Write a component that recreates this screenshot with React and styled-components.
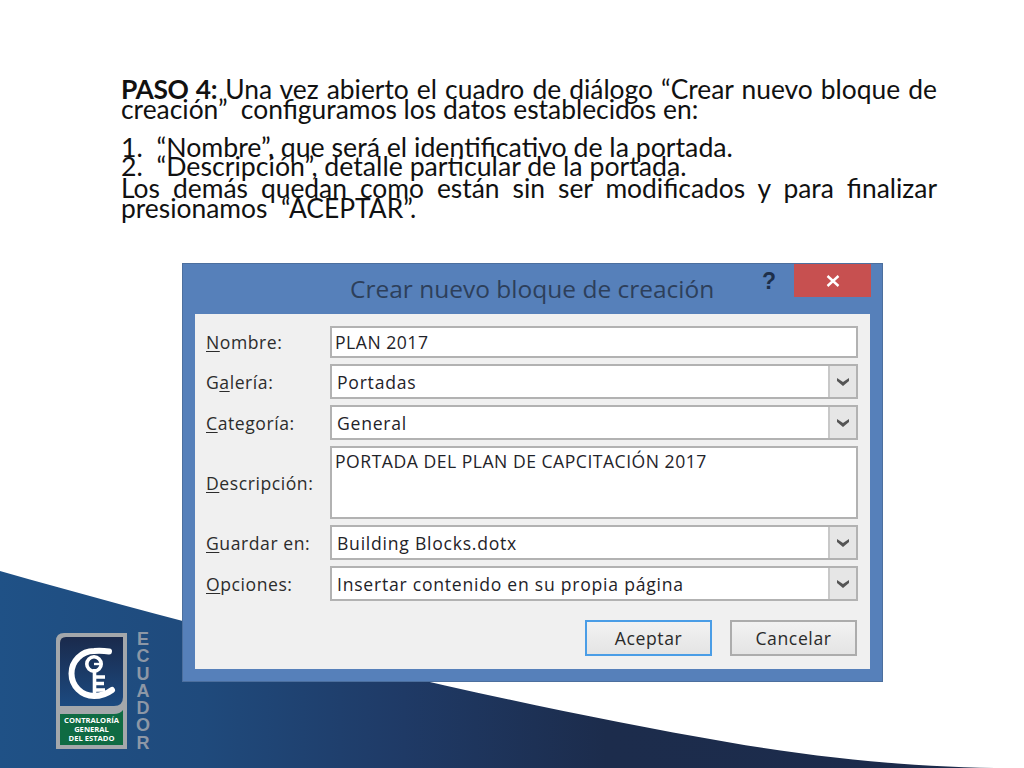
/* Diapositiva: paso 4, cuadro "Crear nuevo bloque de creación" */
import styled, { createGlobalStyle } from "styled-components";

const Global = createGlobalStyle`
  html, body {
    margin: 0;
    padding: 0;
    background: #fff;
  }
`;

const Slide = styled.div`
  position: relative;
  width: 1024px;
  height: 768px;
  overflow: hidden;
  background: #fff;
`;

const Wave = styled.svg`
  position: absolute;
  left: 0;
  top: 0;
  width: 1024px;
  height: 768px;
`;

const Content = styled.div`
  position: relative;
  padding-top: 79px;
`;

const Text = styled.div`
  width: 816px;
  height: 143px;
  margin-left: 121px;
  font-family: "Lato", "Liberation Sans", sans-serif;
  font-size: 26.4px;
  color: #111;
`;

const Paragraph = styled.div`
  margin-bottom: 18px;
`;

const List = styled.div`
  margin-bottom: 1px;
  font-size: 26.7px;
`;

const Line = styled.div`
  height: ${(p) => (p.$tight ? "19.8px" : "20.3px")};
  line-height: ${(p) => (p.$tight ? "19.8px" : "20.3px")};
  white-space: nowrap;
  text-align: justify;
  text-align-last: ${(p) => (p.$justify ? "justify" : "left")};
`;

const Strong = styled.b`
  letter-spacing: -0.4px;
`;

const Dialog = styled.div`
  box-sizing: border-box;
  width: 701px;
  height: 419px;
  margin: 41px 0 0 182px;
  padding: 0 12px 12px 12px;
  background: #5680ba;
  border: 1px solid #4c6f9e;
  font-family: "Open Sans", "Liberation Sans", sans-serif;
`;

const TitleBar = styled.div`
  display: flex;
  height: 50px;
  margin-right: -12px;
`;

const Title = styled.div`
  flex: 1;
  padding: 8px 0 0 155px;
  font-size: 24.5px;
  line-height: 34px;
  color: #2d3f5a;
`;

const Help = styled.div`
  width: 32px;
  font-family: "Liberation Sans", sans-serif;
  font-size: 23px;
  font-weight: 700;
  line-height: 34px;
  color: #1d2f4a;
`;

const Close = styled.div`
  display: flex;
  align-items: center;
  justify-content: center;
  width: 77px;
  height: 33px;
  margin-right: 11px;
  background: #c75050;
`;

const Body = styled.div`
  box-sizing: border-box;
  height: 355px;
  padding: 12px 12px 0 11px;
  background: #f0f0f0;
`;

const Form = styled.div`
  display: grid;
  grid-template-columns: 124px 528px;
  grid-template-rows: 32px 35px 35px 73px 35px 35px;
  row-gap: 6px;
  align-items: center;
`;

const Label = styled.div`
  font-size: 17.6px;
  letter-spacing: 0.55px;
  color: #2c2c2c;
`;

const Key = styled.span`
  text-decoration: underline;
  text-underline-offset: 2px;
`;

const Field = styled.div`
  box-sizing: border-box;
  display: flex;
  align-items: ${(p) => (p.$multi ? "flex-start" : "center")};
  height: 100%;
  padding: ${(p) => (p.$multi ? "1px 3px" : "0 3px")};
  background: #fff;
  border: 2px solid #b2b2b2;
  font-size: 17.6px;
  letter-spacing: 0.5px;
  color: #1f2329;
`;

const Select = styled(Field)`
  justify-content: space-between;
  padding: 0 0 0 5px;
  letter-spacing: 0.75px;
`;

const Arrow = styled.div`
  box-sizing: border-box;
  display: flex;
  align-items: center;
  justify-content: center;
  width: 28px;
  height: 100%;
  background: #e6e6e6;
  border-left: 2px solid #c8c8c8;
`;

const Buttons = styled.div`
  display: flex;
  justify-content: flex-end;
  gap: 18px;
  margin: 19px 1px 0 0;
`;

const Button = styled.div`
  box-sizing: border-box;
  display: flex;
  align-items: center;
  justify-content: center;
  width: 127px;
  height: 36px;
  background: linear-gradient(#f2f2f2, #e4e4e4);
  border: ${(p) => (p.$primary ? "2px solid #4a9de6" : "2px solid #acacac")};
  font-size: 17.6px;
  letter-spacing: 0.6px;
  color: #2a2a2a;
`;

const Logo = styled.svg`
  position: absolute;
  left: 56px;
  top: 633px;
  width: 71px;
  height: 116px;
`;

const Country = styled.div`
  position: absolute;
  left: 135px;
  top: 631px;
  display: flex;
  flex-direction: column;
  align-items: center;
  width: 16px;
  font-family: "Liberation Sans", sans-serif;
  font-size: 18px;
  font-weight: 700;
  line-height: 17.3px;
  color: #8d97a6;
`;

const Chevron = () => (
  <svg width="14" height="10" viewBox="0 0 14 10">
    <path d="M1 1 L7 5 L13 1 L13 4 L7 9 L1 4 Z" fill="#555" />
  </svg>
);

const FORM_SELECT = [
  { label: "Guardar en:", key: "G", rest: "uardar en:", value: "Building Blocks.dotx" },
  { label: "Opciones:", key: "O", rest: "pciones:", value: "Insertar contenido en su propia página" },
];

function App() {
  return (
    <Slide>
      <Global />
      <Wave viewBox="0 0 1024 768">
        <defs>
          <linearGradient id="wave" x1="0" y1="0" x2="1" y2="0">
            <stop offset="0" stopColor="#1f5186" />
            <stop offset="0.2" stopColor="#1f4a7c" />
            <stop offset="0.4" stopColor="#1f3a66" />
            <stop offset="0.6" stopColor="#1c2c4c" />
            <stop offset="1" stopColor="#1c2b4b" />
          </linearGradient>
        </defs>
        <path d="M0 571 C200 628 480 700 727 742 C830 760 930 768 1010 768 L0 768 Z" fill="url(#wave)" />
      </Wave>

      <Logo viewBox="0 0 71 116">
        <defs>
          <linearGradient id="navy" x1="0" y1="0" x2="0" y2="1">
            <stop offset="0" stopColor="#1a2a4c" />
            <stop offset="1" stopColor="#1c4a80" />
          </linearGradient>
        </defs>
        <path d="M8 0 H71 V116 H0 V8 Q0 0 8 0 Z" fill="#a3a7ab" />
        <path d="M10 4 H67 V64 Q67 73 58 73 H4 V10 Q4 4 10 4 Z" fill="url(#navy)" />
        <path d="M67 77 V112 H4 V81 H58 Q64 81 67 77 Z" fill="#0f6b43" />
        <path d="M53 18.5 Q46 17.5 38 18 A22.5 22.5 0 1 0 38 63 Q48 63 56 57" fill="none" stroke="#fff" strokeWidth="6" strokeLinecap="round" />
        <circle cx="38" cy="31" r="7.2" fill="none" stroke="#fff" strokeWidth="3.6" />
        <path d="M38.5 36 V60 M38 44 H49 M38 50.5 H48 M38 57 H49" fill="none" stroke="#fff" strokeWidth="3.6" />
        <path d="M38 31 H46" fill="none" stroke="#fff" strokeWidth="2.4" />
        <g fill="#fff" fontFamily="Open Sans, sans-serif" fontSize="7.6" fontWeight="700" textAnchor="middle">
          <text x="35.5" y="90">CONTRALORÍA</text>
          <text x="35.5" y="99">GENERAL</text>
          <text x="35.5" y="108">DEL ESTADO</text>
        </g>
      </Logo>
      <Country>
        {"ECUADOR".split("").map((c, i) => (
          <span key={i}>{c}</span>
        ))}
      </Country>

      <Content>
        <Text>
          <Paragraph>
            <Line $justify>
              <Strong>PASO 4:</Strong> Una vez abierto el cuadro de diálogo “Crear nuevo bloque de
            </Line>
            <Line>creación”&nbsp; configuramos los datos establecidos en:</Line>
          </Paragraph>
          <List>
            <Line $tight>1.&nbsp;&nbsp;“Nombre”, que será el identificativo de la portada.</Line>
            <Line $tight>2.&nbsp;&nbsp;“Descripción”, detalle particular de la portada.</Line>
          </List>
          <Line $justify>Los demás quedan como están sin ser modificados y para finalizar</Line>
          <Line>presionamos&nbsp; “ACEPTAR”.</Line>
        </Text>

        <Dialog>
          <TitleBar>
            <Title>Crear nuevo bloque de creación</Title>
            <Help>?</Help>
            <Close>
              <svg width="14" height="12" viewBox="0 0 14 12">
                <path d="M1.5 1 L12.5 11 M12.5 1 L1.5 11" stroke="#fff" strokeWidth="2.4" />
              </svg>
            </Close>
          </TitleBar>
          <Body>
            <Form>
              <Label><Key>N</Key>ombre:</Label>
              <Field>PLAN 2017</Field>
              <Label>G<Key>a</Key>lería:</Label>
              <Select>Portadas<Arrow><Chevron /></Arrow></Select>
              <Label><Key>C</Key>ategoría:</Label>
              <Select>General<Arrow><Chevron /></Arrow></Select>
              <Label><Key>D</Key>escripción:</Label>
              <Field $multi>PORTADA DEL PLAN DE CAPCITACIÓN 2017</Field>
              {FORM_SELECT.map((v) => [
                <Label key={v.label}><Key>{v.key}</Key>{v.rest}</Label>,
                <Select key={v.value}>{v.value}<Arrow><Chevron /></Arrow></Select>,
              ])}
            </Form>
            <Buttons>
              <Button $primary>Aceptar</Button>
              <Button>Cancelar</Button>
            </Buttons>
          </Body>
        </Dialog>
      </Content>
    </Slide>
  );
}

export default App;
